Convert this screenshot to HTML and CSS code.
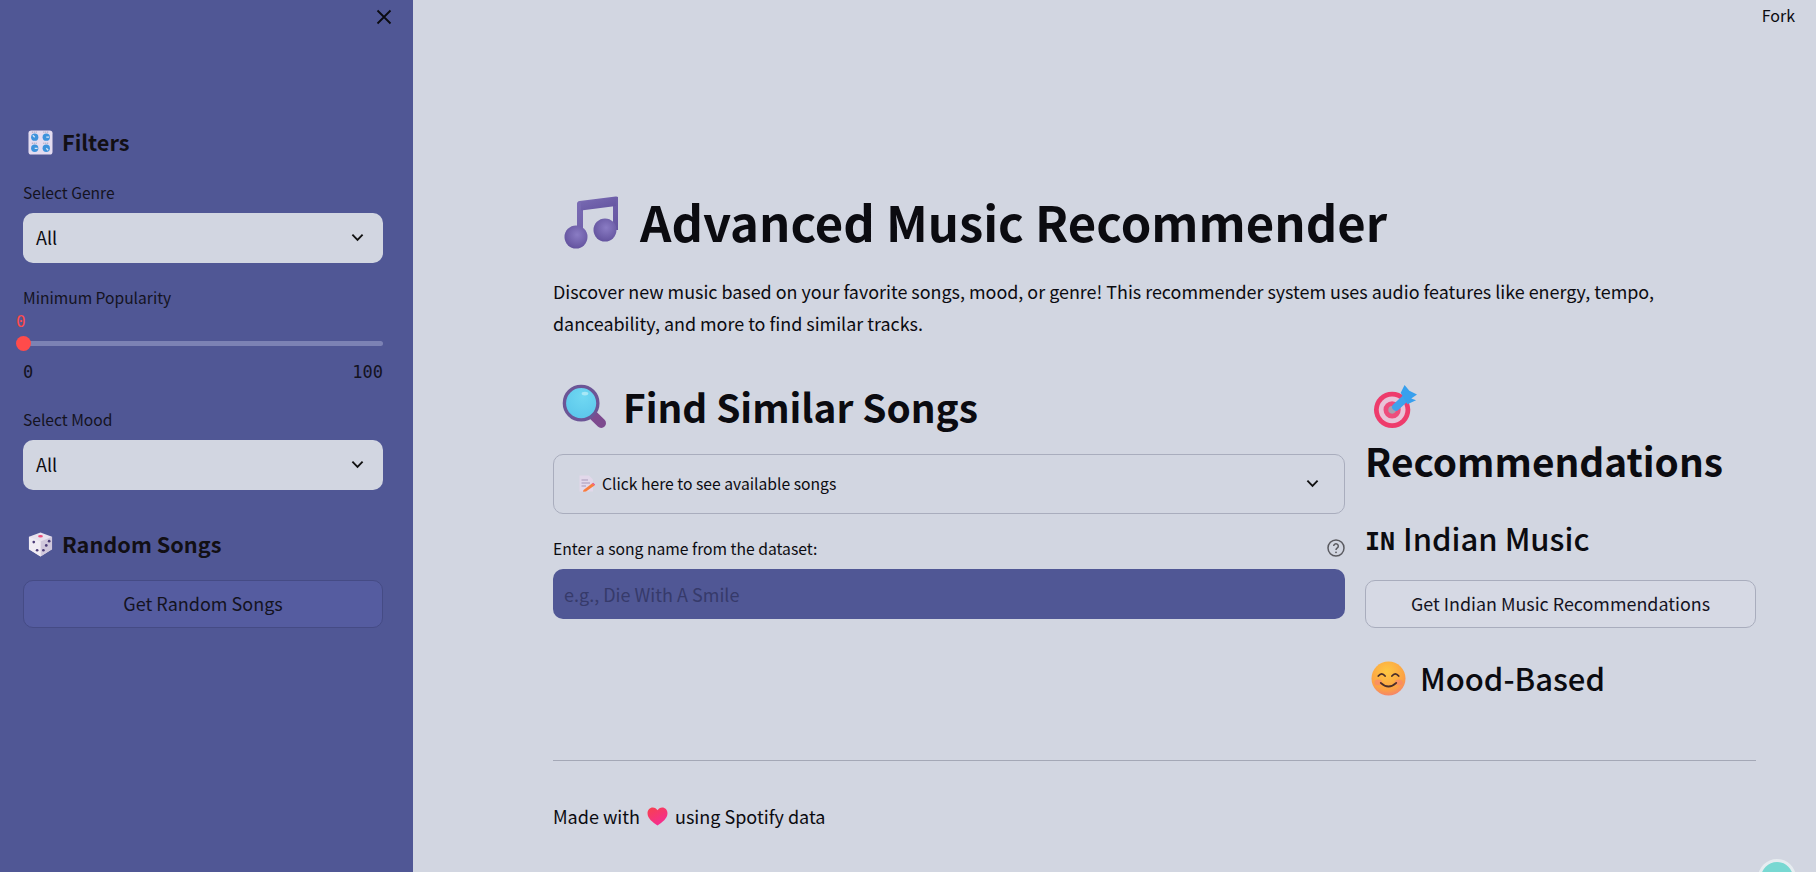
FILE: index.html
```html
<!DOCTYPE html>
<html lang="en">
<head>
    <meta charset="UTF-8">
    <meta name="viewport" content="width=device-width, initial-scale=1.0">
    <title>Advanced Music Recommender</title>
    <link rel="stylesheet" href="styles.css">
</head>
<body>
    <svg class="defs" width="0" height="0" aria-hidden="true">
        <defs>
            <linearGradient id="noteGrad" x1="0" y1="0" x2="1" y2="1">
                <stop offset="0" stop-color="#7a6cb4"/>
                <stop offset="1" stop-color="#62529e"/>
            </linearGradient>
            <radialGradient id="ballGrad" cx="0.55" cy="0.4" r="0.6">
                <stop offset="0" stop-color="#8a7cc4"/>
                <stop offset="1" stop-color="#64549f"/>
            </radialGradient>
            <radialGradient id="lensGrad" cx="0.55" cy="0.3" r="0.8">
                <stop offset="0" stop-color="#70d8f2"/>
                <stop offset="1" stop-color="#58c4ea"/>
            </radialGradient>
            <radialGradient id="smileGrad" cx="0.45" cy="0.3" r="0.75">
                <stop offset="0" stop-color="#fec842"/>
                <stop offset="0.7" stop-color="#fca244"/>
                <stop offset="1" stop-color="#f47e72"/>
            </radialGradient>
            <linearGradient id="heartGrad" x1="0" y1="0" x2="0.6" y2="1">
                <stop offset="0" stop-color="#f8414c"/>
                <stop offset="1" stop-color="#f52d92"/>
            </linearGradient>
        </defs>
    </svg>

    <aside class="sidebar">
        <div class="sidebar-top">
            <svg class="close-icon" viewBox="0 0 16 16" width="16" height="16">
                <path d="M1.500 1.500L14.500 14.500M14.500 1.500L1.500 14.500" stroke="#0b0b10" stroke-width="1.800" fill="none"/>
            </svg>
        </div>

        <h3 class="side-heading first">
            <svg class="emoji-side" viewBox="0 0 26 26">
                <rect x="0.500" y="0.500" width="25" height="25" rx="3" fill="#e4dcf0"/>
                <circle cx="7" cy="7.500" r="3.800" fill="#3d93dc"/>
                <circle cx="19" cy="7.500" r="3.800" fill="#3d93dc"/>
                <circle cx="7" cy="19" r="3.800" fill="#3d93dc"/>
                <circle cx="19" cy="19" r="3.800" fill="#3d93dc"/>
                <path d="M7 7.500L5 5.500M19 7.500h3M7 19h3M19 19l2 2" stroke="#d8e6f6" stroke-width="1.300"/>
                <path d="M4 2.200h6M16 2.200h6M4 13.700h6M16 13.700h6" stroke="#8f8aa8" stroke-width="1" stroke-dasharray="1 1"/>
            </svg>
            <span>Filters</span>
        </h3>

        <label class="side-label">Select Genre</label>
        <div class="select-box">
            <span>All</span>
            <svg class="chevron" viewBox="0 0 14 9" width="13" height="9"><path d="M1.500 1.500L7 7L12.500 1.500" stroke="#111" stroke-width="2" fill="none"/></svg>
        </div>

        <label class="side-label popularity">Minimum Popularity</label>
        <div class="slider">
            <div class="slider-value">0</div>
            <div class="slider-track"><div class="slider-thumb"></div></div>
            <div class="slider-ends"><span>0</span><span>100</span></div>
        </div>

        <label class="side-label mood">Select Mood</label>
        <div class="select-box">
            <span>All</span>
            <svg class="chevron" viewBox="0 0 14 9" width="13" height="9"><path d="M1.500 1.500L7 7L12.500 1.500" stroke="#111" stroke-width="2" fill="none"/></svg>
        </div>

        <h3 class="side-heading random">
            <svg class="emoji-side" viewBox="0 0 26 26">
                <path d="M13 0.500L25 5V18L13 25.500L1 18V5Z" fill="#e8e2ee"/>
                <path d="M13 10L25 5V18L13 25.500Z" fill="#d0c8dc"/>
                <path d="M1 5L13 10V25.500L1 18Z" fill="#f1ecf4"/>
                <ellipse cx="13" cy="4.500" rx="2.500" ry="1.300" fill="#ee4f7c"/>
                <circle cx="6" cy="10.500" r="1.400" fill="#4c3c78"/>
                <circle cx="9.500" cy="19" r="1.400" fill="#4c3c78"/>
                <circle cx="22" cy="9.500" r="1.400" fill="#4c3c78"/>
                <circle cx="19" cy="14" r="1.400" fill="#4c3c78"/>
                <circle cx="16" cy="19" r="1.400" fill="#4c3c78"/>
            </svg>
            <span>Random Songs</span>
        </h3>
        <button class="side-button">Get Random Songs</button>
    </aside>

    <main class="main">
        <div class="fork">Fork</div>

        <h1 class="page-title">
            <svg class="emoji-title" viewBox="0 0 54 56">
                <path d="M16 50V11L52 6.500V37" fill="none" stroke="url(#noteGrad)" stroke-width="6" stroke-linejoin="round"/>
                <path d="M17 9L52 4.500V13L17 17.500Z" fill="url(#noteGrad)"/>
                <circle cx="12" cy="44" r="11.500" fill="url(#ballGrad)"/>
                <circle cx="41" cy="37" r="11.500" fill="url(#ballGrad)"/>
            </svg>
            <span>Advanced Music Recommender</span>
        </h1>
        <p class="intro">Discover new music based on your favorite songs, mood, or genre! This recommender system uses audio features like energy, tempo, danceability, and more to find similar tracks.</p>

        <div class="columns">
            <section class="col-left">
                <h2 class="section-title">
                    <svg class="emoji-h2" viewBox="0 0 46 46">
                        <path d="M33.500 33.500L41 41" stroke="#7d4a8e" stroke-width="10" stroke-linecap="round"/>
                        <circle cx="20" cy="20" r="17.500" fill="url(#lensGrad)" stroke="#6c5596" stroke-width="3.500"/>
                        <ellipse cx="24" cy="10" rx="3.500" ry="2" fill="#a8e8f6"/>
                    </svg>
                    <span>Find Similar Songs</span>
                </h2>

                <div class="expander">
                    <div class="expander-title">
                        <svg class="emoji-memo" viewBox="0 0 16 17">
                            <path d="M0.500 0.500H10L14 4.500V16.500H0.500Z" fill="#e2d8ea"/>
                            <path d="M2.500 5H9M2.500 8H11M2.500 11H7" stroke="#a898b8" stroke-width="1"/>
                            <path d="M4.500 15L13 8.500L15.500 10.500L7 16.500L4 16.800Z" fill="#f97d3c"/>
                            <path d="M13 8.500L15.500 10.500L16 9.500L14 7.800Z" fill="#f2477a"/>
                        </svg>
                        <span>Click here to see available songs</span>
                    </div>
                    <svg class="chevron" viewBox="0 0 14 9" width="13" height="9"><path d="M1.500 1.500L7 7L12.500 1.500" stroke="#111" stroke-width="2" fill="none"/></svg>
                </div>

                <div class="input-label">
                    <label>Enter a song name from the dataset:</label>
                    <svg class="help-icon" viewBox="0 0 18 18" width="18" height="18">
                        <circle cx="9" cy="9" r="8" fill="none" stroke="#5a5a60" stroke-width="1.500"/>
                        <path d="M6.700 7a2.300 2.200 0 1 1 3.600 1.900C9.400 9.500 9 10 9 11" fill="none" stroke="#5a5a60" stroke-width="1.500"/>
                        <circle cx="9" cy="13.300" r="0.900" fill="#5a5a60"/>
                    </svg>
                </div>
                <input class="song-input" type="text" placeholder="e.g., Die With A Smile">
            </section>

            <section class="col-right">
                <h2 class="section-title wrap">
                    <svg class="emoji-h2 target" viewBox="0 0 46 46">
                        <circle cx="20" cy="26" r="19" fill="#ee3c6c"/>
                        <circle cx="20" cy="26" r="14" fill="#e8c4d8"/>
                        <circle cx="20" cy="26" r="9" fill="#ee4c7c"/>
                        <circle cx="20" cy="26" r="4" fill="#a8a0b0"/>
                        <path d="M24 23L36 12" stroke="#3fa2ec" stroke-width="8" stroke-linecap="round"/>
                        <path d="M29 8L33 0L38 6L46 10L40 14L45 16L36 20Z" fill="#38a0ee"/>
                    </svg>
                    Recommendations
                </h2>

                <h3 class="sub-title indian"><span class="flag">IN</span><span>Indian Music</span></h3>
                <button class="main-button">Get Indian Music Recommendations</button>

                <h3 class="sub-title moodbased">
                    <svg class="emoji-smile" viewBox="0 0 36 36">
                        <circle cx="18" cy="18" r="17.500" fill="url(#smileGrad)"/>
                        <ellipse cx="7.500" cy="22" rx="4" ry="3" fill="#f77a7c" opacity="0.500"/>
                        <ellipse cx="28.500" cy="22" rx="4" ry="3" fill="#f77a7c" opacity="0.500"/>
                        <path d="M7.500 15.500Q11 11 14.500 15.500M21.500 15.500Q25 11 28.500 15.500" fill="none" stroke="#4a2e2a" stroke-width="1.800" stroke-linecap="round"/>
                        <path d="M10 22.500Q18 30 26 22.500" fill="none" stroke="#4a2e2a" stroke-width="1.800" stroke-linecap="round"/>
                    </svg>
                    <span>Mood-Based</span>
                </h3>
            </section>
        </div>

        <hr class="rule">
        <p class="footer-note">Made with
            <svg class="emoji-heart" viewBox="0 0 22 20">
                <path d="M11 19.500C6 16 0.500 12 0.500 6.500C0.500 3 3 0.500 6 0.500C8.200 0.500 10 1.700 11 3.500C12 1.700 13.800 0.500 16 0.500C19 0.500 21.500 3 21.500 6.500C21.500 12 16 16 11 19.500Z" fill="url(#heartGrad)"/>
            </svg>
            using Spotify data</p>

        <div class="status-dot"></div>
    </main>
</body>
</html>
```

FILE: styles.css
```css
* {
    box-sizing: border-box;
}
html, body {
    height: 100%;
}
body {
    margin: 0;
    display: flex;
    overflow: hidden;
    background: #d2d6e1;
    color: #0b0b10;
    font-family: "Noto Sans CJK SC", "Noto Sans", sans-serif;
}
.defs {
    position: absolute;
}

/* sidebar */
.sidebar {
    width: 413px;
    flex: none;
    padding: 0 30px 0 23px;
    background: #505795;
}
.sidebar-top {
    display: flex;
    justify-content: flex-end;
    height: 126px;
    padding: 9px 0 0;
}
.close-icon {
    margin-right: -9px;
}
.side-heading {
    display: flex;
    align-items: center;
    margin: 0;
    padding-left: 5px;
    font-size: 21.700px;
    line-height: 32px;
    font-weight: 600;
    color: #120f14;
}
.side-heading.first {
    margin-bottom: 24px;
}
.side-heading.random {
    margin-top: 38px;
}
.emoji-side {
    width: 25px;
    height: 25px;
    margin-right: 9px;
}
.side-label {
    display: block;
    font-size: 15.600px;
    line-height: 20px;
    color: #14131f;
}
.side-label.popularity {
    margin-top: 24px;
}
.side-label.mood {
    margin-top: 27px;
}
.select-box {
    display: flex;
    justify-content: space-between;
    align-items: center;
    height: 50px;
    margin-top: 11px;
    padding: 0 19px 2px 13px;
    background: #d2d6e1;
    border-radius: 10px;
    font-size: 18px;
}
.slider {
    margin-top: 5px;
}
.slider-value {
    margin-left: -7px;
    height: 20px;
    font-family: "DejaVu Sans Mono", monospace;
    font-size: 16px;
    line-height: 20px;
    color: #ff4b4b;
}
.slider-track {
    position: relative;
    height: 5px;
    margin-top: 9px;
    background: #7c82b4;
    border-radius: 3px;
}
.slider-thumb {
    position: absolute;
    left: -7px;
    top: -5px;
    width: 15px;
    height: 15px;
    background: #ff4b4b;
    border-radius: 50%;
}
.slider-ends {
    display: flex;
    justify-content: space-between;
    margin-top: 16px;
    font-family: "DejaVu Sans Mono", monospace;
    font-size: 17px;
    line-height: 20px;
    color: #14131f;
}
.side-button {
    display: block;
    width: 100%;
    height: 48px;
    margin-top: 20px;
    padding-bottom: 3px;
    background: #555ca0;
    border: 1px solid #454b85;
    border-radius: 10px;
    font-family: inherit;
    font-size: 18px;
    color: #14131f;
}

/* main area */
.main {
    flex: 1;
    padding: 0 60px 0 140px;
}
.fork {
    position: absolute;
    top: 5px;
    right: 21px;
    font-size: 16px;
    line-height: 20px;
}
.page-title {
    display: flex;
    align-items: center;
    margin: 187px 0 0;
    padding-left: 11px;
    font-size: 49px;
    line-height: 68px;
    font-weight: 700;
}
.emoji-title {
    width: 54px;
    height: 56px;
    margin-right: 22px;
}
.intro {
    margin: 20px 0 0;
    font-size: 17.920px;
    line-height: 32px;
}
.columns {
    display: grid;
    grid-template-columns: 792px 391px;
    gap: 20px;
    margin-top: 38px;
}
.section-title {
    display: flex;
    align-items: center;
    margin: 0;
    padding-left: 9px;
    font-size: 38.800px;
    line-height: 58px;
    font-weight: 600;
}
.section-title.wrap {
    display: block;
    padding-left: 0;
}
.emoji-h2 {
    width: 44px;
    height: 44px;
    margin-right: 17px;
}
.target {
    display: block;
    margin: 8px 0 2px 8px;
}
.expander {
    display: flex;
    justify-content: space-between;
    align-items: center;
    height: 60px;
    margin-top: 19px;
    padding: 0 25px 2px 25px;
    border: 1px solid #a9adbd;
    border-radius: 10px;
}
.expander-title {
    display: flex;
    align-items: center;
    font-size: 15.700px;
}
.emoji-memo {
    width: 16px;
    height: 17px;
    margin-right: 7px;
}
.input-label {
    display: flex;
    justify-content: space-between;
    align-items: center;
    height: 20px;
    margin-top: 24px;
    font-size: 15.700px;
}
.song-input {
    display: block;
    width: 100%;
    height: 50px;
    margin-top: 11px;
    padding: 0 11px;
    background: #505795;
    border: 0;
    border-radius: 10px;
    font-family: inherit;
    font-size: 18px;
}
.song-input::placeholder {
    color: #363a6a;
    opacity: 1;
}
.sub-title {
    display: flex;
    align-items: center;
    margin: 0;
    font-size: 31px;
    line-height: 44px;
    font-weight: 500;
}
.sub-title.indian {
    margin-top: 27px;
}
.sub-title.moodbased {
    margin-top: 28px;
    padding-left: 6px;
}
.flag {
    margin: 8px 8px 0 0;
    font-family: "DejaVu Sans Mono", monospace;
    font-size: 25px;
    line-height: 30px;
    font-weight: 700;
}
.main-button {
    display: block;
    width: 100%;
    height: 48px;
    margin-top: 20px;
    padding-bottom: 3px;
    background: #d6d9e4;
    border: 1px solid #a9adbd;
    border-radius: 10px;
    font-family: inherit;
    font-size: 17.900px;
    color: #14131f;
}
.emoji-smile {
    width: 35px;
    height: 35px;
    margin-right: 14px;
}
.rule {
    margin: 60px 0 0;
    border: 0;
    border-top: 1px solid #a4a8b6;
}
.footer-note {
    display: flex;
    align-items: center;
    gap: 7px;
    margin: 41px 0 0;
    font-size: 18px;
    line-height: 28px;
}
.emoji-heart {
    width: 21px;
    height: 19px;
}
.status-dot {
    position: absolute;
    left: 1758px;
    top: 859px;
    width: 38px;
    height: 38px;
    background: #78d8d2;
    border: 3px solid #e6ecf0;
    border-radius: 50%;
}
```
